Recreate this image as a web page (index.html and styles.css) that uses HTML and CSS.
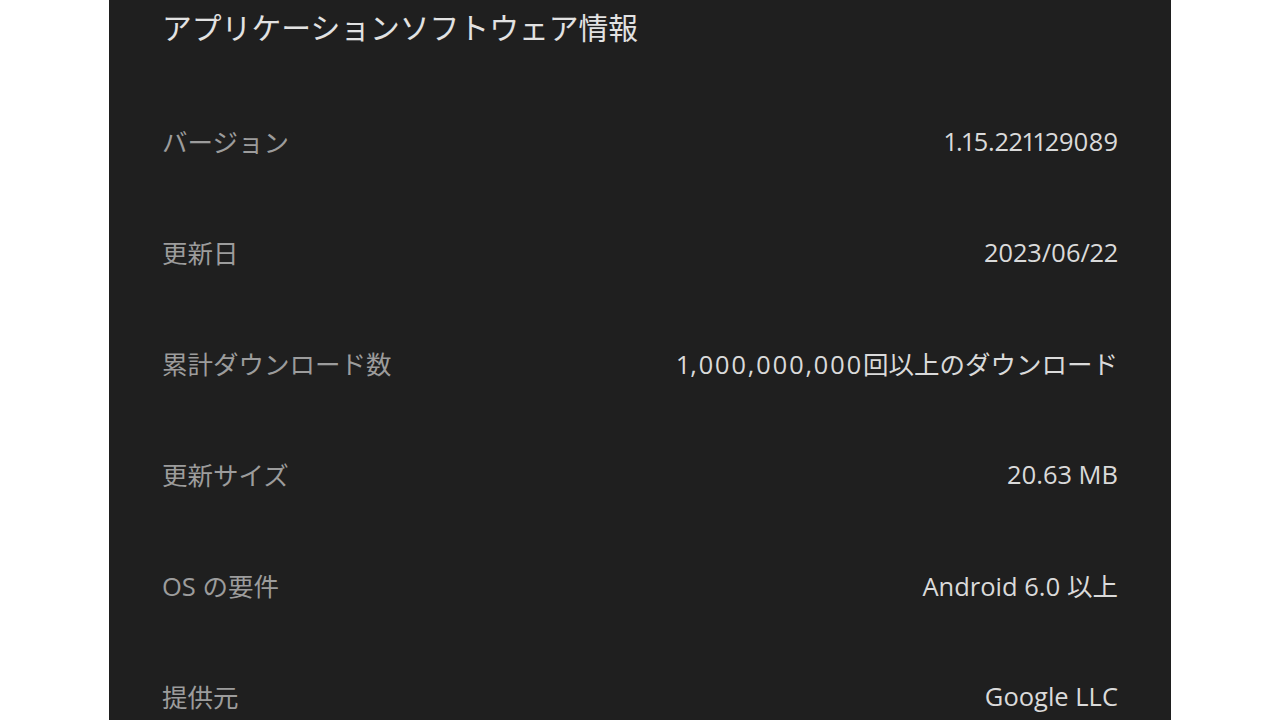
FILE: index.html
```html
<!DOCTYPE html>
<html lang="ja">
<head>
<meta charset="utf-8">
<title>アプリケーションソフトウェア情報</title>
<link rel="stylesheet" href="styles.css">
</head>
<body>
<main class="panel">
  <h1 class="title">アプリケーションソフトウェア情報</h1>
  <dl class="rows">
    <div class="row"><dt class="label">バージョン</dt><dd class="value">1.15.221129089</dd></div>
    <div class="row"><dt class="label">更新日</dt><dd class="value">2023/06/22</dd></div>
    <div class="row"><dt class="label">累計ダウンロード数</dt><dd class="value"><span class="count">1,000,000,000</span>回以上のダウンロード</dd></div>
    <div class="row"><dt class="label">更新サイズ</dt><dd class="value">20.63 MB</dd></div>
    <div class="row"><dt class="label">OS の要件</dt><dd class="value">Android 6.0 以上</dd></div>
    <div class="row"><dt class="label">提供元</dt><dd class="value">Google LLC</dd></div>
  </dl>
</main>
</body>
</html>
```

FILE: styles.css
```css
html, body {
  margin: 0;
  padding: 0;
  background: #ffffff;
  height: 100%;
  overflow: hidden;
}

body {
  font-family: "Open Sans", "Noto Sans CJK JP", sans-serif;
  font-variant-numeric: proportional-nums;
}

.panel {
  width: 1062px;
  height: 720px;
  margin-left: 109px;
  background: #1f1f1f;
  box-sizing: border-box;
  padding: 0 53px;
}

.title {
  margin: 0 0 29px 0;
  font-size: 29.8px;
  font-weight: 400;
  line-height: 56px;
  color: #e2e2e2;
  letter-spacing: 0;
}

.rows {
  margin: 0;
  padding: 0;
}

.row {
  display: flex;
  justify-content: space-between;
  align-items: center;
  height: 111px;
}

.label {
  margin: 0;
  font-size: 25.5px;
  color: #9c9c9c;
}

.value {
  margin: 0;
  font-size: 25.5px;
  color: #dadada;
}

.count {
  letter-spacing: 1.6px;
}
```
